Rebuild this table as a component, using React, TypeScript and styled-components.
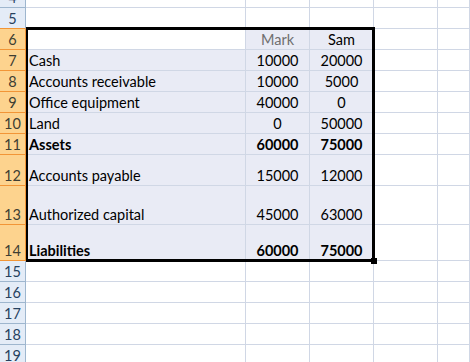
import React from "react";
import styled, { createGlobalStyle } from "styled-components";

const GlobalStyle = createGlobalStyle`
  html, body { margin: 0; padding: 0; background: #ffffff; overflow: hidden; }
  body { font-family: Lato, "Liberation Sans", sans-serif; }
`;

const GRID = "#d0d7e5";
const FILL = "#e9ebf5";

const Viewport = styled.div`
  position: relative;
  width: 470px;
  height: 362px;
  overflow: hidden;
  background: #fff;
`;

const Sheet = styled.div`
  display: flex;
  flex-direction: column;
`;

const Row = styled.div<{ $h: number }>`
  display: flex;
  height: ${(p) => p.$h}px;
  flex: none;
`;

const RowHeader = styled.div<{ $hl: boolean; $edge: boolean }>`
  box-sizing: border-box;
  width: 26px;
  flex: none;
  display: flex;
  align-items: flex-end;
  justify-content: center;
  overflow: hidden;
  font-size: 14.5px;
  line-height: 16px;
  padding-bottom: 1px;
  background: ${(p) => (p.$hl ? "#fdd38e" : "#e4ecf7")};
  color: ${(p) => (p.$hl ? "#3e3e33" : "#27415f")};
  border-right: 1px solid ${(p) => (p.$hl ? "#f29536" : "#9eb6ce")};
  border-bottom: 1px solid ${(p) => (p.$hl || p.$edge ? "#f29536" : "#9eb6ce")};
`;

const Cell = styled.div<{
  $w?: number;
  $fill?: boolean;
  $align?: "left" | "center";
  $bold?: boolean;
  $muted?: boolean;
}>`
  box-sizing: border-box;
  width: ${(p) => (p.$w ? `${p.$w}px` : "auto")};
  flex: ${(p) => (p.$w ? "none" : "1")};
  display: flex;
  align-items: flex-end;
  justify-content: ${(p) => (p.$align === "left" ? "flex-start" : "center")};
  padding: 0 0 1px ${(p) => (p.$align === "left" ? "3px" : "0")};
  overflow: hidden;
  white-space: nowrap;
  font-size: 14.5px;
  line-height: 16px;
  font-weight: ${(p) => (p.$bold ? 700 : 400)};
  color: ${(p) => (p.$muted ? "#6f6f6f" : "#000")};
  background: ${(p) => (p.$fill ? FILL : "#fff")};
  border-right: 1px solid ${GRID};
  border-bottom: 1px solid ${GRID};
`;

const Selection = styled.div`
  position: absolute;
  left: 26px;
  top: 27px;
  width: 349px;
  height: 235px;
  box-sizing: border-box;
  border: 3px solid #000;
  border-left-width: 2px;
  pointer-events: none;
`;

const FillHandle = styled.div`
  position: absolute;
  left: 371px;
  top: 258px;
  width: 6px;
  height: 6px;
  background: #000;
  pointer-events: none;
`;

type RowData = {
  n: number;
  h: number;
  label?: string;
  b?: string;
  c?: string;
  bold?: boolean;
  inTable?: boolean;
  labelFill?: boolean;
  header?: boolean;
};

const rows: RowData[] = [
  { n: 4, h: 8 },
  { n: 5, h: 21 },
  { n: 6, h: 21, inTable: true, labelFill: false, b: "Mark", c: "Sam", header: true },
  { n: 7, h: 21, inTable: true, labelFill: true, label: "Cash", b: "10000", c: "20000" },
  { n: 8, h: 21, inTable: true, labelFill: true, label: "Accounts receivable", b: "10000", c: "5000" },
  { n: 9, h: 21, inTable: true, labelFill: true, label: "Office equipment", b: "40000", c: "0" },
  { n: 10, h: 21, inTable: true, labelFill: true, label: "Land", b: "0", c: "50000" },
  { n: 11, h: 21, inTable: true, labelFill: true, label: "Assets", b: "60000", c: "75000", bold: true },
  { n: 12, h: 31, inTable: true, labelFill: true, label: "Accounts payable", b: "15000", c: "12000" },
  { n: 13, h: 39, inTable: true, labelFill: true, label: "Authorized capital", b: "45000", c: "63000" },
  { n: 14, h: 36, inTable: true, labelFill: true, label: "Liabilities", b: "60000", c: "75000", bold: true },
  { n: 15, h: 21 },
  { n: 16, h: 21 },
  { n: 17, h: 21 },
  { n: 18, h: 21 },
  { n: 19, h: 21 },
];

export default function App() {
  return (
    <Viewport>
      <GlobalStyle />
      <Sheet>
        {rows.map((r) => (
          <Row key={r.n} $h={r.h}>
            <RowHeader $hl={!!r.inTable} $edge={r.n === 5}>
              {r.n}
            </RowHeader>
            <Cell $w={220} $align="left" $fill={!!r.labelFill} $bold={r.bold}>
              {r.label}
            </Cell>
            <Cell $w={64} $fill={!!r.inTable} $bold={r.bold} $muted={r.header}>
              {r.b}
            </Cell>
            <Cell $w={64} $fill={!!r.inTable} $bold={r.bold}>
              {r.c}
            </Cell>
            <Cell $w={64} />
            <Cell />
          </Row>
        ))}
      </Sheet>
      <Selection />
      <FillHandle />
    </Viewport>
  );
}
